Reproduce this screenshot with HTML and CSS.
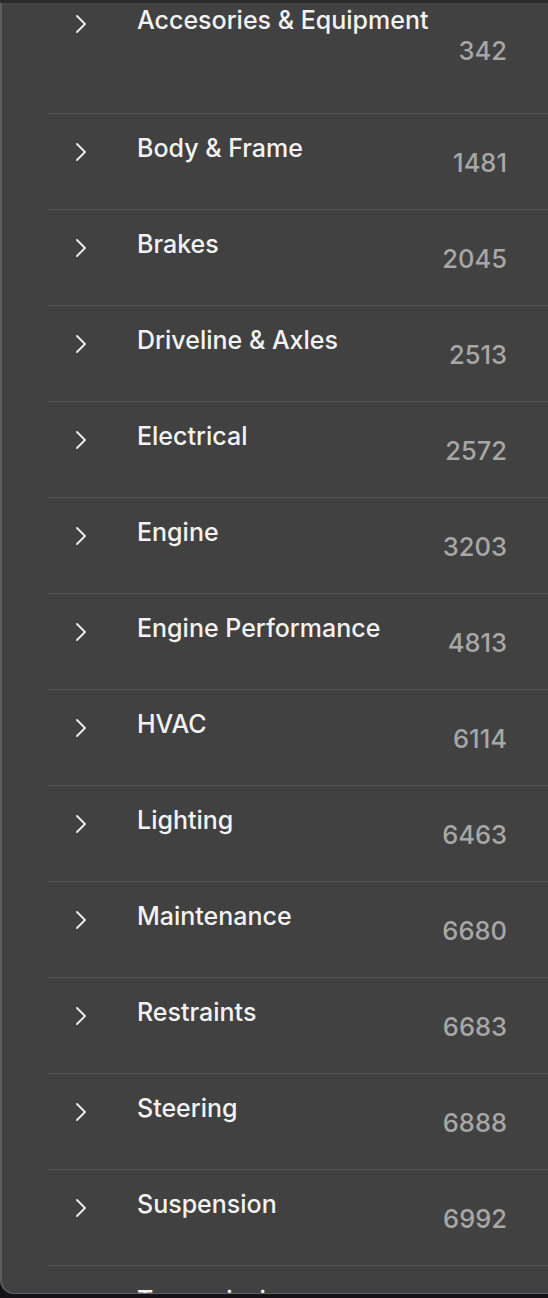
FILE: index.html
```html
<!DOCTYPE html>
<html lang="en">
<head>
<meta charset="utf-8">
<title>Categories</title>
<link rel="stylesheet" href="styles.css">
</head>
<body>
<div class="top-strip"></div>
<div class="panel">
  <ul class="list">
    <li class="row row-tall"><svg class="chev" viewBox="0 0 12 20"><path d="M2 2 L10 10 L2 18"/></svg><span class="title">Accesories &amp; Equipment</span><span class="count">342</span></li>
    <li class="row"><svg class="chev" viewBox="0 0 12 20"><path d="M2 2 L10 10 L2 18"/></svg><span class="title">Body &amp; Frame</span><span class="count">1481</span></li>
    <li class="row"><svg class="chev" viewBox="0 0 12 20"><path d="M2 2 L10 10 L2 18"/></svg><span class="title">Brakes</span><span class="count">2045</span></li>
    <li class="row"><svg class="chev" viewBox="0 0 12 20"><path d="M2 2 L10 10 L2 18"/></svg><span class="title">Driveline &amp; Axles</span><span class="count">2513</span></li>
    <li class="row"><svg class="chev" viewBox="0 0 12 20"><path d="M2 2 L10 10 L2 18"/></svg><span class="title">Electrical</span><span class="count">2572</span></li>
    <li class="row"><svg class="chev" viewBox="0 0 12 20"><path d="M2 2 L10 10 L2 18"/></svg><span class="title">Engine</span><span class="count">3203</span></li>
    <li class="row"><svg class="chev" viewBox="0 0 12 20"><path d="M2 2 L10 10 L2 18"/></svg><span class="title">Engine Performance</span><span class="count">4813</span></li>
    <li class="row"><svg class="chev" viewBox="0 0 12 20"><path d="M2 2 L10 10 L2 18"/></svg><span class="title">HVAC</span><span class="count">6114</span></li>
    <li class="row"><svg class="chev" viewBox="0 0 12 20"><path d="M2 2 L10 10 L2 18"/></svg><span class="title">Lighting</span><span class="count">6463</span></li>
    <li class="row"><svg class="chev" viewBox="0 0 12 20"><path d="M2 2 L10 10 L2 18"/></svg><span class="title">Maintenance</span><span class="count">6680</span></li>
    <li class="row"><svg class="chev" viewBox="0 0 12 20"><path d="M2 2 L10 10 L2 18"/></svg><span class="title">Restraints</span><span class="count">6683</span></li>
    <li class="row"><svg class="chev" viewBox="0 0 12 20"><path d="M2 2 L10 10 L2 18"/></svg><span class="title">Steering</span><span class="count">6888</span></li>
    <li class="row"><svg class="chev" viewBox="0 0 12 20"><path d="M2 2 L10 10 L2 18"/></svg><span class="title">Suspension</span><span class="count">6992</span></li>
    <li class="row"><svg class="chev" viewBox="0 0 12 20"><path d="M2 2 L10 10 L2 18"/></svg><span class="title">Transmission</span></li>
  </ul>
</div>
</body>
</html>
```
FILE: styles.css
```css
html, body {
  margin: 0;
  padding: 0;
}
body {
  width: 548px;
  height: 1298px;
  overflow: hidden;
  background: #141216;
  font-family: Inter, "Noto Sans", "Liberation Sans", sans-serif;
}
.top-strip {
  height: 3px;
  background: #2b2b2b;
}
.panel {
  height: 1291px;
  background: #414141;
  border-left: 2px solid #5c5c5c;
  border-bottom: 1px solid #626262;
  border-bottom-left-radius: 14px;
  overflow: hidden;
  box-sizing: border-box;
}
.list {
  list-style: none;
  margin: -17px 0 0 46px;
  padding: 0;
}
.row {
  display: grid;
  grid-template-columns: 89px 1fr auto;
  align-items: start;
  height: 96px;
  box-sizing: border-box;
  border-bottom: 1px solid #555555;
  padding-right: 41px;
}
.row-tall {
  height: 128px;
}
.chev {
  width: 12px;
  height: 20px;
  margin: 28px 0 0 27px;
  fill: none;
  stroke: #ececec;
  stroke-width: 1.9;
  stroke-linecap: round;
  stroke-linejoin: round;
}
.title {
  margin-top: 19px;
  font-size: 25px;
  line-height: 30px;
  color: #f3f3f3;
  font-weight: 500;
  white-space: nowrap;
}
.count {
  align-self: center;
  margin-top: 3px;
  font-size: 25.5px;
  line-height: 30px;
  color: #a7a7a7;
  font-weight: 500;
}
```
